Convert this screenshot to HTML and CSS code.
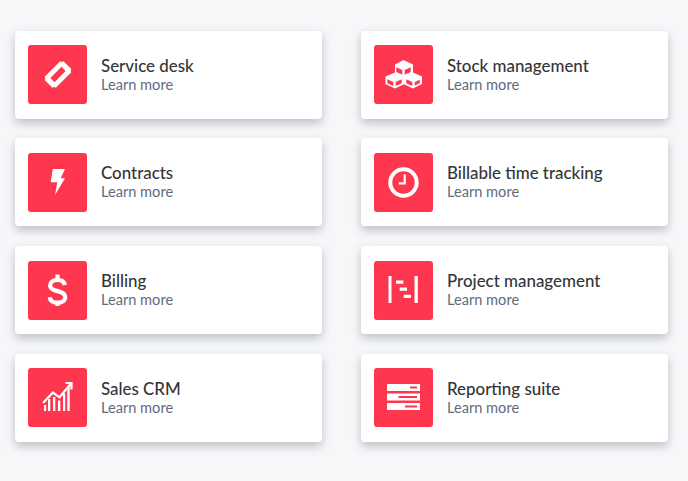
FILE: index.html
```html
<!DOCTYPE html>
<html lang="en">
<head>
<meta charset="utf-8">
<title>Products</title>
<link rel="stylesheet" href="styles.css">
</head>
<body>
<main class="grid">
  <a class="card"><span class="tile"><svg viewBox="0 0 59 59"><path class="solid" fill-rule="evenodd" transform="translate(30 29.500) rotate(-45) scale(1.05)" d="M-10.500-7.500h21a2.200 2.200 0 0 0 2.200 2.200v10.600a2.200 2.200 0 0 0-2.200 2.200h-21a2.200 2.200 0 0 0-2.200-2.200V-5.300a2.200 2.200 0 0 0 2.200-2.200zM-7.500-2.800V2.800H7.500V-2.800z"/></svg></span><span class="text"><span class="title">Service desk</span><span class="more">Learn more</span></span></a>
  <a class="card"><span class="tile"><svg viewBox="0 0 59 59"><path class="solid" d="M29.500 15l9.500 4.400v8.100l9 4v7.600l-9 4.300-9-4.100-9 4.200-9.500-4.400v-7.600l9.500-4v-8.100z"/><path class="cut" d="M22.300 22.300l6 2.700v4.700l-6-2.700zM30.700 25l6-2.700V27l-6 2.700zM13.300 34.300l6 2.700v3.900l-6-2.700zM21.700 37l6-2.700v3.900l-6 2.700zM32.300 34.300l6 2.700v3.900l-6-2.700zM40.700 37l5-2.300v3.500l-5 2.400z"/></svg></span><span class="text"><span class="title">Stock management</span><span class="more">Learn more</span></span></a>
  <a class="card"><span class="tile"><svg viewBox="0 0 59 59"><path class="solid" d="M24.700 16H37l-4.300 9.300H37L27 42l2.300-12.700h-6.600z"/></svg></span><span class="text"><span class="title">Contracts</span><span class="more">Learn more</span></span></a>
  <a class="card"><span class="tile"><svg viewBox="0 0 59 59"><circle class="line" cx="29.500" cy="29.500" r="13.200" stroke-width="4"/><path class="line" stroke-width="2.200" d="M30.700 21.300v9h-6"/></svg></span><span class="text"><span class="title">Billable time tracking</span><span class="more">Learn more</span></span></a>
  <a class="card"><span class="tile"><svg viewBox="0 0 59 59"><path class="line" stroke-width="4.200" d="M36.800 24c-.6-3.300-3.400-5.200-7.300-5.200-4.400 0-7.400 2.200-7.400 5.700 0 3.700 3.300 4.700 7.400 5.600 4.400 1 7.700 2.200 7.700 5.900 0 3.600-3.200 5.700-7.700 5.700-4.200 0-7.300-2-7.800-5.500M29.500 13.500v5.300M29.500 39.700v5.300"/></svg></span><span class="text"><span class="title">Billing</span><span class="more">Learn more</span></span></a>
  <a class="card"><span class="tile"><svg viewBox="0 0 59 59"><path class="solid" d="M14.500 15h3v27h-3zM40.500 15h3.300v27h-3.300zM22 19.500h7.300v3.300H22zM25.700 26.500H33v3.300h-7.300zM29.700 33.700H37V37h-7.300z"/></svg></span><span class="text"><span class="title">Project management</span><span class="more">Learn more</span></span></a>
  <a class="card"><span class="tile"><svg viewBox="0 0 59 59"><path class="solid" d="M16 37h2.200v6H16zM20 31h2.300v12H20zM25 29h2.300v14H25zM30 32.500h2.300V43H30zM35 25.600h2.200V43H35zM39.300 19h2.400v24h-2.400z"/><path class="line" stroke-width="2.200" d="M15 35l10-10.500 6.500 4.800L43 15.500M37.500 15H43.500v6.500"/></svg></span><span class="text"><span class="title">Sales CRM</span><span class="more">Learn more</span></span></a>
  <a class="card"><span class="tile"><svg viewBox="0 0 59 59"><path class="solid" d="M13 16h33v7H13zM13 25.500h33v7H13zM13 35h33v7H13z"/><path class="cut" d="M36 18.500h7v2h-7zM24.500 28h18.500v2H24.500zM31 37.500h12v2H31z"/></svg></span><span class="text"><span class="title">Reporting suite</span><span class="more">Learn more</span></span></a>
</main>
</body>
</html>
```

FILE: styles.css
```css
* { box-sizing: border-box; }
html, body { margin: 0; height: 100%; }
body {
  background: #f6f7f9;
  font-family: Lato, "Noto Sans", sans-serif;
}
.grid {
  display: grid;
  grid-template-columns: 307px 307px;
  grid-auto-rows: 88px;
  column-gap: 39px;
  row-gap: 19.7px;
  padding: 30.5px 15px;
}
.card {
  display: flex;
  align-items: center;
  gap: 14px;
  padding: 0 13px;
  background: #fff;
  border-radius: 4px;
  box-shadow: 0 4px 10px rgba(40, 48, 60, .28);
}
.tile {
  flex: none;
  width: 59px;
  height: 59px;
  margin-top: .8px;
  background: #fe374f;
  border-radius: 3px;
}
.tile svg { display: block; width: 59px; height: 59px; }
.solid { fill: #fff; }
.line { fill: none; stroke: #fff; }
.cut { fill: #fe374f; }
.text { display: flex; flex-direction: column; }
.title {
  font-size: 16.9px;
  line-height: 20px;
  font-weight: 500;
  color: #343538;
}
.more {
  font-size: 14.6px;
  line-height: 18px;
  color: #5f6b7e;
}
```
